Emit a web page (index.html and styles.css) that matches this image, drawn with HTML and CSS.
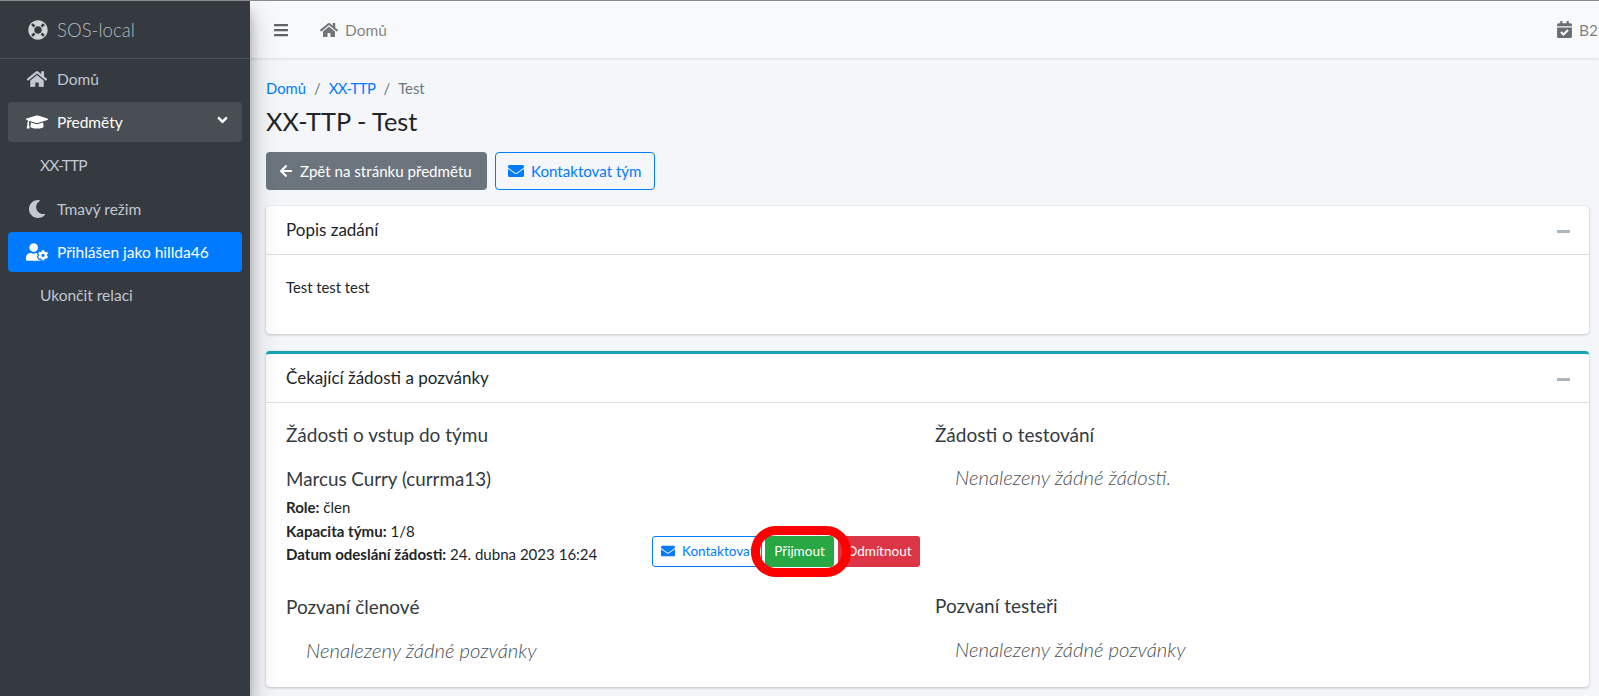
FILE: index.html
```html
<!DOCTYPE html>
<html lang="cs">
<head>
<meta charset="utf-8">
<title>XX-TTP - Test</title>
<link rel="stylesheet" href="styles.css">
</head>
<body>
<svg class="defs" width="0" height="0">
<symbol id="i-bars" viewBox="0 0 448 512"><path d="M16 132h416c8.837 0 16-7.163 16-16V76c0-8.837-7.163-16-16-16H16C7.163 60 0 67.163 0 76v40c0 8.837 7.163 16 16 16zm0 160h416c8.837 0 16-7.163 16-16v-40c0-8.837-7.163-16-16-16H16c-8.837 0-16 7.163-16 16v40c0 8.837 7.163 16 16 16zm0 160h416c8.837 0 16-7.163 16-16v-40c0-8.837-7.163-16-16-16H16c-8.837 0-16 7.163-16 16v40c0 8.837 7.163 16 16 16z"/></symbol>
<symbol id="i-home" viewBox="0 0 576 512"><path d="M280.37 148.26L96 300.11V464a16 16 0 0 0 16 16l112.06-.29a16 16 0 0 0 15.92-16V368a16 16 0 0 1 16-16h64a16 16 0 0 1 16 16v95.64a16 16 0 0 0 16 16.05L464 480a16 16 0 0 0 16-16V300L295.67 148.26a12.19 12.19 0 0 0-15.3 0zM571.6 251.47L488 182.56V44.05a12 12 0 0 0-12-12h-56a12 12 0 0 0-12 12v72.61L318.47 43a48 48 0 0 0-61 0L4.34 251.47a12 12 0 0 0-1.6 16.9l25.5 31A12 12 0 0 0 45.15 301l235.22-193.74a12.19 12.19 0 0 1 15.3 0L530.9 301a12 12 0 0 0 16.9-1.6l25.5-31a12 12 0 0 0-1.7-16.93z"/></symbol>
<symbol id="i-env" viewBox="0 0 512 512"><path d="M502.3 190.8c3.9-3.1 9.7-.2 9.7 4.7V400c0 26.5-21.5 48-48 48H48c-26.5 0-48-21.5-48-48V195.6c0-5 5.7-7.8 9.7-4.7 22.4 17.4 52.1 39.5 154.1 113.6 21.1 15.4 56.7 47.8 92.2 47.6 35.7.3 72-32.8 92.3-47.6 102-74.1 131.6-96.3 154-113.7zM256 320c23.2.4 56.6-29.2 73.4-41.4 132.7-96.3 142.8-104.7 173.4-128.7 5.8-4.5 9.2-11.5 9.2-18.9v-19c0-26.5-21.5-48-48-48H48C21.5 64 0 85.5 0 112v19c0 7.4 3.4 14.3 9.2 18.9 30.6 23.9 40.7 32.4 173.4 128.7 16.8 12.2 50.2 41.8 73.4 41.4z"/></symbol>
<symbol id="i-back" viewBox="0 0 448 512"><path d="M257.5 445.1l-22.2 22.2c-9.4 9.4-24.6 9.4-33.9 0L7 273c-9.4-9.4-9.4-24.6 0-33.9L201.4 44.7c9.4-9.4 24.6-9.4 33.9 0l22.2 22.2c9.5 9.5 9.3 25-.4 34.3L136.6 216H424c13.3 0 24 10.7 24 24v32c0 13.3-10.7 24-24 24H136.6l120.5 114.8c9.8 9.3 10 24.8.4 34.3z"/></symbol>
<symbol id="i-moon" viewBox="0 0 512 512"><path d="M283.211 512c78.962 0 151.079-35.925 198.857-94.792 7.068-8.708-.639-21.43-11.562-19.35-124.203 23.654-238.262-71.576-238.262-196.954 0-72.222 38.662-138.635 101.498-174.394 9.686-5.512 7.25-20.197-3.756-22.23A258.156 258.156 0 0 0 283.211 0c-141.309 0-256 114.511-256 256 0 141.309 114.511 256 256 256z"/></symbol>
<symbol id="i-cap" viewBox="0 0 640 512"><path d="M622.34 153.2L343.4 67.5c-15.2-4.67-31.6-4.67-46.79 0L17.66 153.2c-23.54 7.23-23.54 38.36 0 45.59l48.63 14.94c-10.67 13.19-17.23 29.28-17.88 46.9C38.78 266.15 32 276.11 32 288c0 10.78 5.68 19.85 13.86 25.65L20.33 428.53C18.11 438.52 25.71 448 35.94 448h56.11c10.24 0 17.84-9.48 15.62-19.47L82.14 313.65C90.32 307.85 96 298.78 96 288c0-11.57-6.47-21.25-15.66-26.87.76-15.02 8.44-28.3 20.69-36.72L296.6 284.5c9.06 2.78 26.44 6.25 46.79 0l278.95-85.7c23.55-7.24 23.55-38.36 0-45.6zM352.79 315.09c-28.53 8.76-52.84 3.92-65.59 0l-145.02-44.55L128 384c0 35.35 85.96 64 192 64s192-28.65 192-64l-14.18-113.47-145.03 44.56z"/></symbol>
<symbol id="i-down" viewBox="0 0 320 512"><path d="M143 352.3L7 216.3c-9.4-9.4-9.4-24.6 0-33.9l22.6-22.6c9.4-9.4 24.6-9.4 33.9 0l96.4 96.4 96.4-96.4c9.4-9.4 24.6-9.4 33.9 0l22.6 22.6c9.4 9.4 9.4 24.6 0 33.9l-136 136c-9.2 9.4-24.4 9.4-33.8 0z"/></symbol>
<symbol id="i-cal" viewBox="0 0 448 512"><path d="M436 160H12c-6.627 0-12-5.373-12-12v-36c0-26.51 21.49-48 48-48h48V12c0-6.627 5.373-12 12-12h40c6.627 0 12 5.373 12 12v52h128V12c0-6.627 5.373-12 12-12h40c6.627 0 12 5.373 12 12v52h48c26.51 0 48 21.49 48 48v36c0 6.627-5.373 12-12 12zM12 192h424c6.627 0 12 5.373 12 12v260c0 26.51-21.49 48-48 48H48c-26.51 0-48-21.49-48-48V204c0-6.627 5.373-12 12-12zm333.296 95.947l-28.169-28.398c-4.667-4.705-12.265-4.736-16.97-.068L194.12 364.665l-45.98-46.352c-4.667-4.705-12.266-4.736-16.971-.068l-28.397 28.17c-4.705 4.667-4.736 12.265-.068 16.97l82.601 83.269c4.667 4.705 12.265 4.736 16.97.068l142.953-141.805c4.705-4.667 4.736-12.265.068-16.97z"/></symbol>
<symbol id="i-ring" viewBox="0 0 512 512"><path d="M256 8C119.033 8 8 119.033 8 256s111.033 248 248 248 248-111.033 248-248S392.967 8 256 8zm173.696 119.559l-63.399 63.399c-10.987-18.559-26.67-34.252-45.255-45.255l63.399-63.399a218.396 218.396 0 0 1 45.255 45.255zM256 352c-53.019 0-96-42.981-96-96s42.981-96 96-96 96 42.981 96 96-42.981 96-96 96zM127.559 82.304l63.399 63.399c-18.559 10.987-34.252 26.67-45.255 45.255l-63.399-63.399a218.372 218.372 0 0 1 45.255-45.255zM82.304 384.441l63.399-63.399c10.987 18.559 26.67 34.252 45.255 45.255l-63.399 63.399a218.396 218.396 0 0 1-45.255-45.255zm302.137 45.255l-63.399-63.399c18.559-10.987 34.252-26.67 45.255-45.255l63.399 63.399a218.403 218.403 0 0 1-45.255 45.255z"/></symbol>
<symbol id="i-user" viewBox="0 0 640 512"><path d="M610.5 373.3c2.6-14.1 2.6-28.5 0-42.6l25.8-14.9c3-1.7 4.3-5.2 3.3-8.5-6.7-21.6-18.2-41.2-33.2-57.4-2.3-2.5-6-3.1-9-1.4l-25.8 14.9c-10.9-9.3-23.4-16.5-36.9-21.3v-29.8c0-3.4-2.4-6.4-5.7-7.1-22.3-5-45-4.8-66.2 0-3.3.7-5.7 3.7-5.7 7.1v29.8c-13.5 4.8-26 12-36.9 21.3l-25.8-14.9c-2.9-1.7-6.7-1.1-9 1.4-15 16.2-26.5 35.8-33.2 57.4-1 3.3.4 6.8 3.3 8.5l25.8 14.9c-2.6 14.1-2.6 28.5 0 42.6l-25.8 14.9c-3 1.7-4.3 5.2-3.3 8.5 6.7 21.6 18.2 41.1 33.2 57.4 2.3 2.5 6 3.1 9 1.4l25.8-14.9c10.9 9.3 23.4 16.5 36.9 21.3v29.8c0 3.4 2.4 6.4 5.7 7.1 22.3 5 45 4.8 66.2 0 3.3-.7 5.7-3.7 5.7-7.1v-29.8c13.5-4.8 26-12 36.9-21.3l25.8 14.9c2.9 1.7 6.7 1.1 9-1.4 15-16.2 26.5-35.8 33.2-57.4 1-3.3-.4-6.8-3.3-8.5l-25.8-14.9zM496 400.5c-26.8 0-48.5-21.8-48.5-48.5s21.8-48.5 48.5-48.5 48.5 21.8 48.5 48.5-21.7 48.5-48.5 48.5zM224 256c70.7 0 128-57.3 128-128S294.7 0 224 0 96 57.3 96 128s57.3 128 128 128zm201.2 226.5c-2.3-1.2-4.6-2.6-6.8-3.9l-7.9 4.6c-6 3.4-12.8 5.3-19.6 5.3-10.9 0-21.4-4.6-28.9-12.6-18.3-19.8-32.3-43.9-40.2-69.6-5.5-17.7 1.9-36.4 17.9-45.7l7.9-4.6c-.1-2.6-.1-5.2 0-7.8l-7.9-4.6c-16-9.2-23.4-28-17.9-45.7.9-2.9 2.2-5.8 3.2-8.7-3.8-.3-7.5-1.2-11.4-1.2h-16.7c-22.2 10.2-46.9 16-72.9 16s-50.6-5.8-72.9-16h-16.7C60.2 288 0 348.2 0 422.4V464c0 26.5 21.5 48 48 48h352c10.1 0 19.5-3.2 27.2-8.5-1.2-3.8-2-7.7-2-11.8v-9.2z"/></symbol>
</svg>
<div class="app">
  <aside class="sidebar">
    <div class="brand"><svg class="brand-icon"><use href="#i-ring"/></svg><span>SOS-local</span></div>
    <nav class="menu">
      <a class="item"><svg class="ico"><use href="#i-home"/></svg><span>Domů</span></a>
      <a class="item open"><svg class="ico"><use href="#i-cap"/></svg><span>Předměty</span><svg class="caret"><use href="#i-down"/></svg></a>
      <a class="item sub"><span class="tight">XX-TTP</span></a>
      <a class="item"><svg class="ico"><use href="#i-moon"/></svg><span>Tmavý režim</span></a>
      <a class="item active"><svg class="ico"><use href="#i-user"/></svg><span>Přihlášen jako hillda46</span></a>
      <a class="item sub"><span>Ukončit relaci</span></a>
    </nav>
  </aside>
  <div class="main">
    <header class="navbar">
      <svg class="nav-bars"><use href="#i-bars"/></svg>
      <svg class="nav-home"><use href="#i-home"/></svg>
      <span>Domů</span>
      <div class="nav-right"><svg class="nav-cal"><use href="#i-cal"/></svg><span>B222</span></div>
    </header>
    <main class="content">
      <ol class="crumbs">
        <li><a>Domů</a></li><li class="sep">/</li><li><a class="tight-sm">XX-TTP</a></li><li class="sep">/</li><li class="here">Test</li>
      </ol>
      <h1 class="title">XX-TTP - Test</h1>
      <div class="actions">
        <a class="btn btn-gray"><svg class="btn-ico-back"><use href="#i-back"/></svg>Zpět na stránku předmětu</a>
        <a class="btn btn-outline"><svg class="btn-ico"><use href="#i-env"/></svg>Kontaktovat tým</a>
      </div>
      <section class="card">
        <div class="card-head"><span>Popis zadání</span><i class="minus"></i></div>
        <div class="card-body desc">Test test test</div>
      </section>
      <section class="card accent">
        <div class="card-head"><span>Čekající žádosti a pozvánky</span><i class="minus"></i></div>
        <div class="card-body grid">
          <div class="col">
            <h2 class="h-sec">Žádosti o vstup do týmu</h2>
            <div class="req">
              <div class="req-info">
                <h3 class="req-name">Marcus Curry (currma13)</h3>
                <div class="req-line"><b>Role:</b> člen</div>
                <div class="req-line"><b>Kapacita týmu:</b> 1/8</div>
                <div class="req-line"><b>Datum odeslání žádosti:</b> 24. dubna 2023 16:24</div>
              </div>
              <div class="req-btns">
                <a class="btn sm btn-outline"><svg class="btn-ico-sm"><use href="#i-env"/></svg>Kontaktovat</a>
                <span class="accept-wrap"><a class="btn sm btn-green">Přijmout</a><i class="ring"></i></span>
                <a class="btn sm btn-red">Odmítnout</a>
              </div>
            </div>
            <h2 class="h-sec lower">Pozvaní členové</h2>
            <p class="none">Nenalezeny žádné pozvánky</p>
          </div>
          <div class="col">
            <h2 class="h-sec">Žádosti o testování</h2>
            <p class="none first">Nenalezeny žádné žádosti.</p>
            <h2 class="h-sec lower2">Pozvaní testeři</h2>
            <p class="none">Nenalezeny žádné pozvánky</p>
          </div>
        </div>
      </section>
    </main>
  </div>
</div>
</body>
</html>
```

FILE: styles.css
```css
* { box-sizing: border-box; }
html, body { margin: 0; height: 100%; overflow: hidden; }
body {
  font-family: "Lato", "Noto Sans", sans-serif;
  font-size: 15.5px;
  color: #212529;
  background: #f4f6f9;
  border-top: 1px solid #8a8a8a;
}
.defs { position: absolute; }
svg { fill: currentColor; flex: none; display: block; }
a { text-decoration: none; }
.app { display: flex; height: 695px; }

.sidebar {
  width: 250px;
  flex: none;
  background: #343a40;
  color: #c2c7d0;
  box-shadow: 0 14px 28px rgba(0,0,0,.25), 0 10px 10px rgba(0,0,0,.22);
  z-index: 2;
}
.brand {
  height: 58px;
  display: flex;
  align-items: center;
  padding-left: 28px;
  gap: 9px;
  border-bottom: 1px solid #4b545c;
  font-size: 18.6px;
  font-weight: 300;
  color: #b7bbc0;
}
.brand-icon { width: 20px; height: 20px; color: #d0d3d6; }
.menu { padding: 0 8px; display: flex; flex-direction: column; }
.item {
  height: 40px;
  margin-bottom: 3.2px;
  border-radius: 4px;
  display: flex;
  align-items: center;
  padding-left: 19px;
  color: #c2c7d0;
  gap: 9px;
  position: relative;
  white-space: nowrap;
}
.ico { width: 22px; height: 18px; margin-left: -1px; }
.item.sub { padding-left: 32px; }
.tight { letter-spacing: -.9px; }
.open { background: rgba(255,255,255,.1); color: #fff; }
.active { background: #007bff; color: #fff; }
.caret { width: 11px; height: 16px; position: absolute; right: 14px; top: 10px; color: #fff; }

.main { flex: 1; min-width: 0; display: flex; flex-direction: column; }
.navbar {
  height: 57px;
  flex: none;
  background: #f8f9fa;
  display: flex;
  align-items: center;
  color: rgba(0,0,0,.5);
  padding-left: 24px;
  overflow: hidden;
  box-shadow: 0 1px 3px rgba(0,0,0,.1);
  position: relative;
}
.nav-bars { width: 14px; height: 16px; margin-right: 32px; color: #5f6266; }
.nav-home { width: 18px; height: 16px; margin-right: 7px; color: #727578; }
.nav-right { margin-left: auto; margin-right: -17px; display: flex; align-items: center; gap: 7px; }
.nav-cal { width: 15px; height: 17px; color: #6a6d70; }

.content { padding: 0 10px 0 16px; }
.crumbs { list-style: none; margin: 20px 0 0; padding: 0; display: flex; gap: 8px; line-height: 20px; font-size: 14.8px; }
.crumbs a { color: #007bff; }
.tight-sm { letter-spacing: -.5px; }
.sep, .here { color: #6c757d; }
.title { margin: 7px 0 0; font-size: 25.3px; font-weight: 400; line-height: 32px; color: #212529; }
.actions { display: flex; gap: 8px; margin-top: 15px; font-size: 15.1px; }

.btn {
  display: inline-flex;
  align-items: center;
  height: 38px;
  padding: 0 12px;
  border-radius: 4px;
  border: 1px solid transparent;
  gap: 7px;
  white-space: nowrap;
}
.btn-gray { background: #6c757d; color: #fff; width: 221px; }
.btn-outline { background: transparent; border-color: #007bff; color: #007bff; width: 160px; }
.btn-ico { width: 16px; height: 16px; }
.btn-ico-back { width: 14px; height: 14px; }
.btn.sm { height: 31px; font-size: 13.5px; padding: 0 8px; border-radius: 3px; }
.btn-ico-sm { width: 14px; height: 14px; }
.req-btns .btn-outline { width: 110px; padding-left: 8px; background: #fff; overflow: hidden; margin-right: 3px; }
.btn-green { background: #28a745; color: #fff; width: 69px; justify-content: center; outline: 1px solid #fff; position: relative; z-index: 1; }
.btn-red { background: #dc3545; color: #fff; width: 82px; margin-left: 4px; justify-content: center; }

.card {
  background: #fff;
  border-radius: 4px;
  box-shadow: 0 0 1px rgba(0,0,0,.125), 0 1px 3px rgba(0,0,0,.2);
  margin-top: 16px;
}
.card.accent { border-top: 3px solid #17a2b8; margin-top: 17px; }
.card-head {
  height: 49px;
  display: flex;
  align-items: center;
  justify-content: space-between;
  padding: 0 19px 2px 20px;
  font-size: 17px;
  border-bottom: 1px solid rgba(0,0,0,.125);
}
.minus { width: 13px; height: 3px; background: #adb5bd; margin-top: 4px; }
.desc { padding: 20px; height: 79px; line-height: 24px; font-size: 14.8px; }
.grid { display: grid; grid-template-columns: 1fr 1fr; padding: 20px; column-gap: 15px; height: 284px; }
.h-sec { margin: 0; font-size: 19px; font-weight: 400; line-height: 24px; color: #343a40; }
.req { display: flex; align-items: flex-end; justify-content: space-between; margin-top: 20px; }
.req-name { margin: 0 0 5px; font-size: 18.8px; font-weight: 400; line-height: 24px; color: #343a40; }
.req-line { font-size: 15.05px; line-height: 23.5px; }
.req-btns { display: flex; align-items: center; }
.accept-wrap { position: relative; display: inline-flex; }
.ring {
  position: absolute;
  left: -14px; right: -17px; top: -10px; bottom: -10px;
  border: 9px solid #f00;
  border-radius: 25px;
  z-index: 2;
  pointer-events: none;
}
.none { margin: 0; padding-left: 20px; font-size: 20.3px; font-style: italic; font-weight: 300; color: #495057; line-height: 28px; }
.none.first { margin-top: 16px; }
.lower { margin-top: 28px; }
.lower2 { margin-top: 103px; }
.col > .none:last-child { margin-top: 17px; }
```
